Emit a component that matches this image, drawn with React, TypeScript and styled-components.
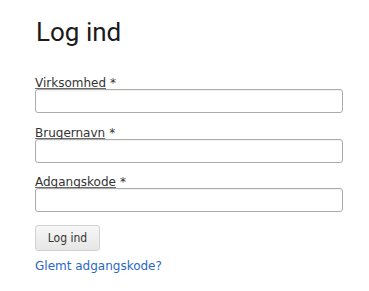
import styled, { createGlobalStyle } from "styled-components";

const GlobalStyle = createGlobalStyle`
    body {
        margin: 0;
        background: #ffffff;
        font-family: "DejaVu Sans", Verdana, sans-serif;
    }
`;

const Page = styled.div`
    padding: 17px 0 0 35px;
    width: 308px;
`;

const Title = styled.h1`
    margin: 0 0 29px 1px;
    font-family: Roboto, "Noto Sans", sans-serif;
    font-size: 26px;
    font-weight: 400;
    line-height: 30px;
    color: #1b1b1b;
`;

const Field = styled.div`
    display: flex;
    flex-direction: column;
    margin-bottom: 12.5px;
`;

const LabelRow = styled.label`
    display: flex;
    align-items: flex-start;
    gap: 4px;
    height: 14px;
    font-size: 12px;
    line-height: 14px;
    color: #333;
    margin-bottom: -1px;
`;

const LabelText = styled.span`
    text-decoration: underline;
    text-decoration-color: #6a6a6a;
    text-decoration-skip-ink: none;
    text-underline-offset: 1px;
`;

const Required = styled.span`
    font-size: 12px;
    line-height: 14px;
`;

const Input = styled.input`
    position: relative;
    box-sizing: border-box;
    width: 308px;
    height: 24px;
    margin: 0;
    border: 1px solid #ababab;
    border-radius: 3px;
    background: #fff;
    box-shadow: inset 0 1px 1px rgba(0, 0, 0, 0.06);
`;

const Button = styled.button`
    box-sizing: border-box;
    width: 65px;
    height: 26px;
    margin-top: 0.5px;
    padding: 0;
    border: 1px solid #d2d2d2;
    border-radius: 3px;
    background: linear-gradient(#f7f7f7, #e6e6e6);
    font-family: "DejaVu Sans Condensed", "DejaVu Sans", sans-serif;
    font-size: 12px;
    color: #333;
`;

const ForgotLink = styled.a`
    display: block;
    margin-top: 8px;
    font-size: 12px;
    line-height: 14px;
    color: #2a67c4;
    text-decoration: none;
`;

const fields = ["Virksomhed", "Brugernavn", "Adgangskode"];

export default function App() {
    return (
        <Page>
            <GlobalStyle />
            <Title>Log ind</Title>
            {fields.map((name) => (
                <Field key={name}>
                    <LabelRow>
                        <LabelText>{name}</LabelText>
                        <Required>*</Required>
                    </LabelRow>
                    <Input type={name === "Adgangskode" ? "password" : "text"} />
                </Field>
            ))}
            <Button>Log ind</Button>
            <ForgotLink href="#">Glemt adgangskode?</ForgotLink>
        </Page>
    );
}
